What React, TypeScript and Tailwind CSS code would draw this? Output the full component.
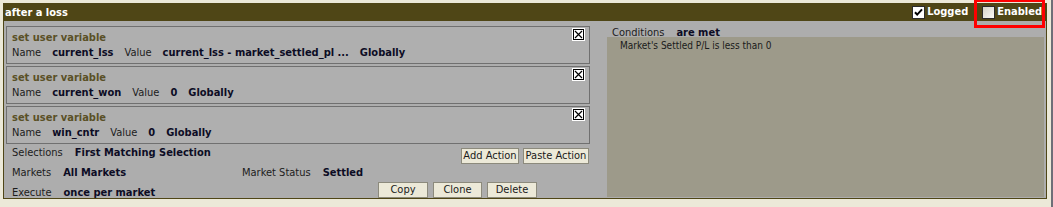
const bold = "font-bold text-[#0c0c24]";

function CloseBox() {
  return (
    <svg width="13" height="13" viewBox="0 0 13 13" className="shrink-0">
      <rect x="0" y="0" width="13" height="13" fill="#ffffff" />
      <rect x="1.5" y="1.5" width="10" height="10" fill="#ffffff" stroke="#000000" />
      <path d="M3 3L10 10M10 3L3 10" stroke="#000000" strokeWidth="1.2" />
    </svg>
  );
}

function CheckBox({ checked }: { checked: boolean }) {
  return (
    <svg width="13" height="13" viewBox="0 0 13 13" className="shrink-0">
      <defs>
        <linearGradient id="cbg" x1="0" y1="0" x2="1" y2="1">
          <stop offset="0" stopColor="#d4d2c6" />
          <stop offset="1" stopColor="#fbfbf8" />
        </linearGradient>
      </defs>
      <rect x="0.5" y="0.5" width="12" height="12" fill={checked ? "#ffffff" : "url(#cbg)"} stroke="#2b2b2b" />
      {checked && <path d="M3 6.2L5.2 8.6L10 3.4" fill="none" stroke="#000000" strokeWidth="2" />}
    </svg>
  );
}

function ActionBox({ name, value }: { name: string; value: string }) {
  return (
    <div className="h-[38px] border border-[#707070] bg-[#afafaf] pl-[5px] pr-[4px] pt-[3px]">
      <div className="flex h-[15px] items-start justify-between">
        <span className="font-bold leading-[15px] text-[#5a5026]">set user variable</span>
        <div className="-mt-[2px]">
          <CloseBox />
        </div>
      </div>
      <div className="flex h-[16px] items-center gap-[11px] leading-[16px]">
        <span>Name</span>
        <span className={bold}>{name}</span>
        <span>Value</span>
        <span className={bold}>{value}</span>
        <span className={bold}>Globally</span>
      </div>
    </div>
  );
}

function Button({ label, width }: { label: string; width: string }) {
  return (
    <div className={`flex h-[16px] items-center justify-center border border-[#8c8a7c] bg-[#ece9d8] leading-[14px] text-[#1a1a1a] ${width}`}>
      {label}
    </div>
  );
}

export default function App() {
  return (
    <div className="relative flex h-[207px] w-[1053px] bg-[#ece9d8] font-['DejaVu_Sans_Condensed','Liberation_Sans',sans-serif] text-[11px] text-[#1c1c1c]">
      <div className="ml-[3px] mt-[3px] h-[196px] w-[1044px] border-x border-b border-[#4f4616]">
        <div className="flex h-[18px] items-center justify-between bg-[#4f4616] pl-[1px] pr-[4px] text-white">
          <span className="pt-[1px] font-bold leading-[18px]">after a loss</span>
          <div className="flex items-center gap-[14px]">
            <div className="flex items-center gap-[2px]">
              <CheckBox checked />
              <span className="font-bold">Logged</span>
            </div>
            <div className="flex items-center gap-[2px]">
              <CheckBox checked={false} />
              <span className="font-bold">Enabled</span>
            </div>
          </div>
        </div>

        <div className="flex h-[177px] bg-[#adadad] pb-[1px] pr-[2px]">
          <div className="flex w-[587px] flex-col">
            <div className="flex flex-col gap-[2px] pl-[2px] pr-[1px] pt-[5px]">
              <ActionBox name="current_lss" value="current_lss - market_settled_pl ..." />
              <ActionBox name="current_won" value="0" />
              <ActionBox name="win_cntr" value="0" />
            </div>
            <div className="pl-[8px] pr-[2px]">
              <div className="flex h-[20px] justify-between">
                <div className="flex gap-[12px] pt-[1px] leading-[16px]">
                  <span>Selections</span>
                  <span className={bold}>First Matching Selection</span>
                </div>
                <div className="flex gap-[4px] self-end">
                  <Button label="Add Action" width="w-[58px]" />
                  <Button label="Paste Action" width="w-[66px]" />
                </div>
              </div>
              <div className="flex h-[16px] pt-[1px] leading-[16px]">
                <div className="flex w-[230px] gap-[12px]">
                  <span>Markets</span>
                  <span className={bold}>All Markets</span>
                </div>
                <div className="flex gap-[12px]">
                  <span>Market Status</span>
                  <span className={bold}>Settled</span>
                </div>
              </div>
              <div className="flex h-[18px]">
                <div className="flex w-[366px] gap-[12px] pt-[5px] leading-[16px]">
                  <span>Execute</span>
                  <span className={bold}>once per market</span>
                </div>
                <div className="mt-[2px] flex h-[15px] gap-[5px]">
                  <Button label="Copy" width="w-[50px] h-[15px]" />
                  <Button label="Clone" width="w-[49px] h-[15px]" />
                  <Button label="Delete" width="w-[50px] h-[15px]" />
                </div>
              </div>
            </div>
          </div>

          <div className="ml-[16px] flex flex-1 flex-col">
            <div className="flex h-[16px] gap-[12px] pl-[5px] pt-[6px] leading-[11px]">
              <span>Conditions</span>
              <span className={bold}>are met</span>
            </div>
            <div className="flex-1 bg-[#9d9a8a] pl-[13px] pt-[2px] text-[10px] leading-[14px] text-[#1a1a1a]">
              Market&apos;s Settled P/L is less than 0
            </div>
          </div>
        </div>
      </div>
      <div className="ml-auto h-full w-[2px] bg-[#6e6e78]" />

      <div className="absolute left-[974px] top-[-1px] h-[29px] w-[71px] border-[3px] border-[#ff0000]" />
    </div>
  );
}
